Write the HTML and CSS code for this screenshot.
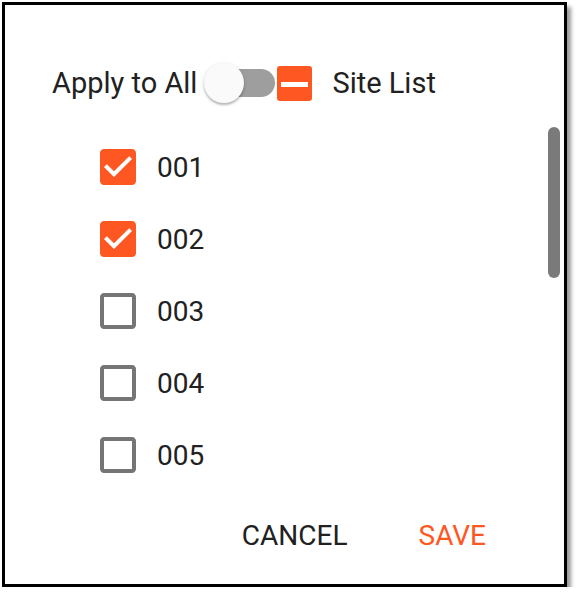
FILE: index.html
```html
<!DOCTYPE html>
<html lang="en">

<head>
  <meta charset="UTF-8">
  <meta name="viewport" content="width=device-width, initial-scale=1.0">
  <title>Site List</title>
  <link rel="stylesheet" href="styles.css">
</head>

<body>
  <main class="dialog">
    <header class="dialog-head">
      <span class="label">Apply to All</span>
      <span class="switch">
        <span class="switch-track"></span>
        <span class="switch-thumb"></span>
      </span>
      <svg class="box-mixed" width="35" height="35" viewBox="0 0 35 35">
        <rect width="35" height="35" rx="3" fill="#ff5722"/>
        <rect x="4" y="16" width="27" height="5" fill="#fff"/>
      </svg>
      <span class="label site-label">Site List</span>
    </header>

    <section class="site-list">
      <div class="site-row">
        <svg class="box" viewBox="3 3 18 18"><path class="box-on" d="M19 3H5c-1.11 0-2 .9-2 2v14c0 1.1.89 2 2 2h14c1.11 0 2-.9 2-2V5c0-1.1-.89-2-2-2zm-9 14l-5-5 1.41-1.41L10 14.17l7.59-7.59L19 8l-9 9z"/></svg>
        <span class="site-name">001</span>
      </div>
      <div class="site-row">
        <svg class="box" viewBox="3 3 18 18"><path class="box-on" d="M19 3H5c-1.11 0-2 .9-2 2v14c0 1.1.89 2 2 2h14c1.11 0 2-.9 2-2V5c0-1.1-.89-2-2-2zm-9 14l-5-5 1.41-1.41L10 14.17l7.59-7.59L19 8l-9 9z"/></svg>
        <span class="site-name">002</span>
      </div>
      <div class="site-row">
        <svg class="box" viewBox="3 3 18 18"><path class="box-off" d="M19 5v14H5V5h14m0-2H5c-1.1 0-2 .9-2 2v14c0 1.1.9 2 2 2h14c1.1 0 2-.9 2-2V5c0-1.1-.9-2-2-2z"/></svg>
        <span class="site-name">003</span>
      </div>
      <div class="site-row">
        <svg class="box" viewBox="3 3 18 18"><path class="box-off" d="M19 5v14H5V5h14m0-2H5c-1.1 0-2 .9-2 2v14c0 1.1.9 2 2 2h14c1.1 0 2-.9 2-2V5c0-1.1-.9-2-2-2z"/></svg>
        <span class="site-name">004</span>
      </div>
      <div class="site-row">
        <svg class="box" viewBox="3 3 18 18"><path class="box-off" d="M19 5v14H5V5h14m0-2H5c-1.1 0-2 .9-2 2v14c0 1.1.9 2 2 2h14c1.1 0 2-.9 2-2V5c0-1.1-.9-2-2-2z"/></svg>
        <span class="site-name">005</span>
      </div>
      <!-- scroll thumb, list is scrolled to the top -->
      <span class="scroll-thumb"></span>
    </section>

    <footer class="dialog-actions">
      <button class="btn">CANCEL</button>
      <button class="btn btn-save">SAVE</button>
    </footer>
  </main>
</body>

</html>
```

FILE: styles.css
```css
/* ---- General ---- */

:root {
  font-family: "Roboto", "Liberation Sans", sans-serif;
  --orange: #ff5722;
  --text: #212121;
  --grey: #757575;
}

body {
  margin: 0;
  background: #fff;
}

.dialog {
  display: flex;
  flex-direction: column;
  box-sizing: border-box;
  width: 565px;
  height: 585px;
  margin: 2px 0 0 2px;
  padding-bottom: 4px;
  border: 3px solid #000;
  background: #fff;
  box-shadow: 4px 5px 4px rgba(0, 0, 0, 0.4);
}

/* ---- Header ---- */

.dialog-head {
  display: flex;
  align-items: center;
  height: 40px;
  margin-top: 58px;
  padding-left: 47px;
  flex-shrink: 0;
}

.label {
  font-size: 29px;
  color: var(--text);
  margin-right: 7px;
}

.site-label {
  margin-left: 20px;
}

.switch {
  position: relative;
  width: 71px;
  height: 40px;
  flex-shrink: 0;
}

.switch-track {
  position: absolute;
  left: 3px;
  top: 6px;
  width: 68px;
  height: 28px;
  border-radius: 14px;
  background: #9e9e9e;
}

.switch-thumb {
  position: absolute;
  left: 0;
  top: 0;
  width: 40px;
  height: 40px;
  border-radius: 50%;
  background: #fafafa;
  box-shadow: 0 2px 2px rgba(0, 0, 0, 0.22), 0 1px 4px rgba(0, 0, 0, 0.12);
}

.box-mixed {
  display: block;
  margin-left: 2px;
  flex-shrink: 0;
}

/* ---- List ---- */

.site-list {
  position: relative;
  flex-shrink: 0;
  height: 363px;
  margin: 24px 4px 0 0;
  padding: 4px 0;
  box-sizing: border-box;
  overflow: hidden;
}

.scroll-thumb {
  position: absolute;
  top: 0;
  right: 0;
  width: 12px;
  height: 151px;
  border-radius: 6px;
  background: #7a7a7a;
}

.site-row {
  display: flex;
  align-items: center;
  height: 72px;
  padding-left: 95px;
}

.box {
  display: block;
  width: 36px;
  height: 36px;
  margin-right: 21px;
}

.box-on {
  fill: var(--orange);
}

.box-off {
  fill: var(--grey);
}

.site-name {
  font-size: 28px;
  color: var(--text);
}

/* ---- Footer ---- */

.dialog-actions {
  display: flex;
  justify-content: flex-end;
  align-items: center;
  height: 90px;
  padding-right: 78px;
  flex-shrink: 0;
}

.btn {
  padding: 0;
  border: none;
  background: none;
  font-family: inherit;
  font-size: 28px;
  color: var(--text);
  cursor: pointer;
}

.btn-save {
  margin-left: 71px;
  color: var(--orange);
}
```
